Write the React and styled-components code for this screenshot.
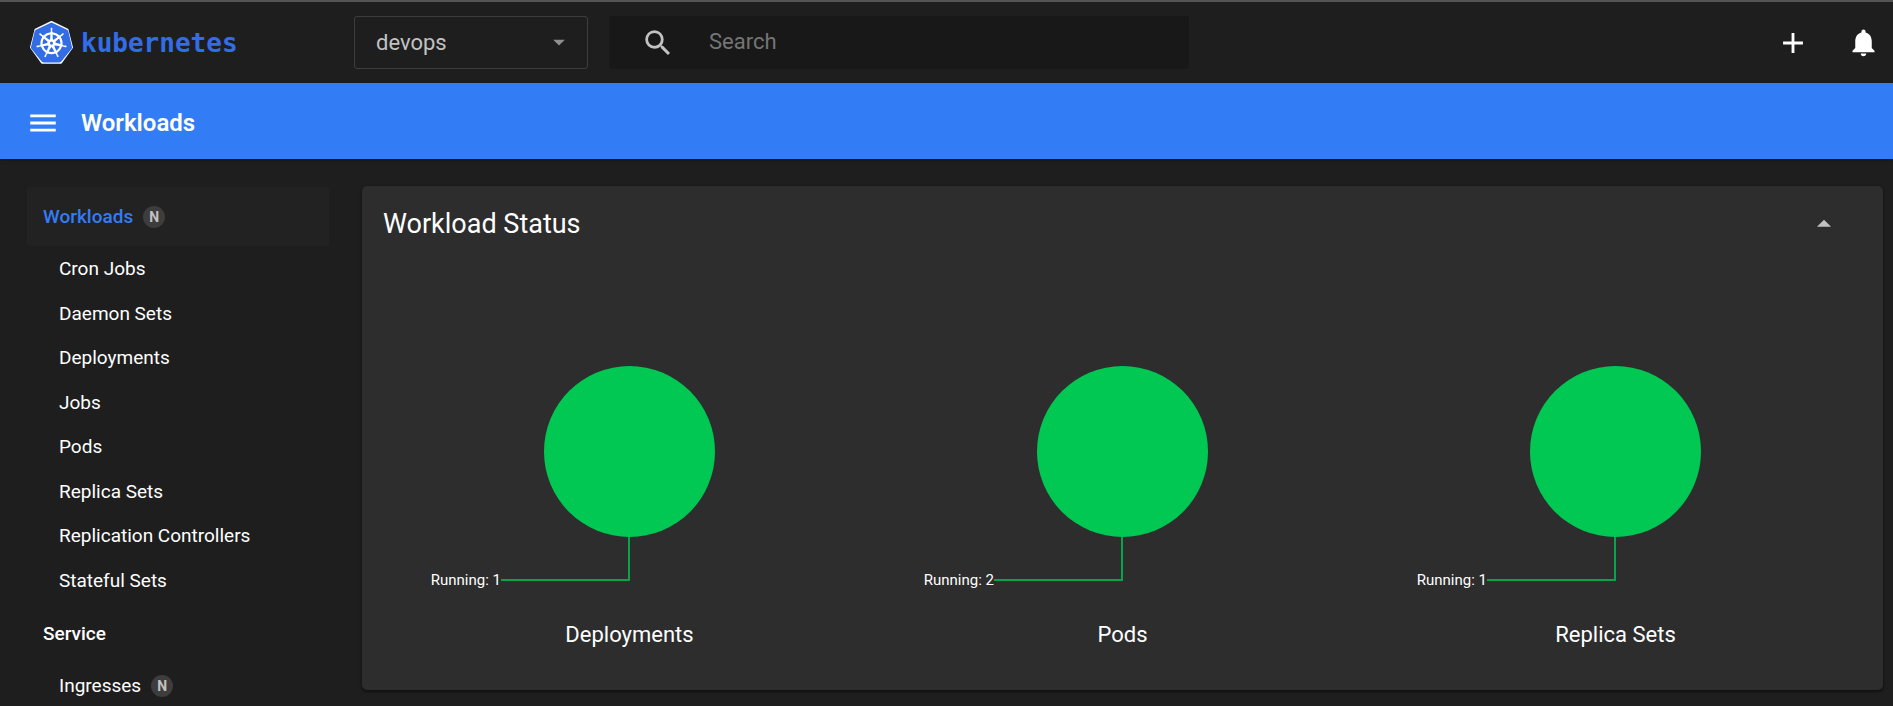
import React, { useState } from 'react';
import styled, { createGlobalStyle } from 'styled-components';
import { SiKubernetes } from 'react-icons/si';
import {
  MdAdd,
  MdArrowDropDown,
  MdArrowDropUp,
  MdMenu,
  MdNotifications,
  MdSearch,
} from 'react-icons/md';

const GlobalStyle = createGlobalStyle`
  *, *::before, *::after { box-sizing: border-box; }
  body {
    margin: 0;
    background: #1e1e1e;
    color: #fff;
    font-family: Roboto, "Liberation Sans", sans-serif;
  }
`;

const Shell = styled.div`
  display: flex;
  flex-direction: column;
  height: 100vh;
  overflow: hidden;
`;

const TopBar = styled.header`
  display: flex;
  align-items: center;
  flex: none;
  height: 83px;
  padding-left: 30px;
  border-top: 2px solid #545454;
`;

const Brand = styled.a`
  display: flex;
  align-items: center;
  gap: 8px;
  width: 324px;
  flex: none;
  color: #326de6;
  font: bold 26px/32px "DejaVu Sans Mono", monospace;
  text-decoration: none;
`;

const NamespaceField = styled.div`
  position: relative;
  flex: none;
  width: 234px;
  margin-right: 21px;
`;

const NamespaceSelect = styled.select`
  appearance: none;
  width: 100%;
  height: 53px;
  padding: 0 40px 0 21px;
  border: 1px solid #3d3d3d;
  border-radius: 3px;
  background: transparent;
  color: #c2c2c2;
  font: 22px/28px Roboto, sans-serif;
`;

const SelectCaret = styled(MdArrowDropDown)`
  position: absolute;
  top: 12px;
  right: 15px;
  color: #8f8f8f;
  pointer-events: none;
`;

const SearchBox = styled.form`
  display: flex;
  align-items: center;
  gap: 34px;
  flex: 0 1 580px;
  height: 53px;
  padding: 0 32px;
  border-radius: 3px;
  background: #181818;
  color: #c2c2c2;
`;

const SearchInput = styled.input`
  flex: 1;
  min-width: 0;
  padding: 0 0 2px;
  border: 0;
  outline: 0;
  background: transparent;
  color: #c2c2c2;
  font: 22px/28px Roboto, sans-serif;
  &::placeholder { color: #757575; opacity: 1; }
`;

const Actions = styled.div`
  display: flex;
  gap: 10px;
  margin-left: auto;
`;

const IconButton = styled.button`
  display: flex;
  align-items: center;
  justify-content: center;
  flex: none;
  width: ${(p) => p.$width || 60}px;
  height: 60px;
  padding: 0;
  border: 0;
  background: transparent;
  color: ${(p) => p.$color || '#fff'};
  cursor: pointer;
`;

const TitleBar = styled.div`
  display: flex;
  align-items: center;
  gap: 21px;
  flex: none;
  height: 76px;
  padding: 3px 0 0 26px;
  background: #327df5;
  box-shadow: 0 1px 3px rgba(0, 0, 0, 0.4);
`;

const PageTitle = styled.h1`
  margin: 0;
  font-size: 24px;
  line-height: 32px;
  font-weight: 600;
`;

const Body = styled.div`
  display: flex;
  flex: 1;
  min-height: 0;
`;

const Sidebar = styled.nav`
  flex: none;
  width: 356px;
  padding: 28px 27px 0;
  overflow-y: auto;
  scrollbar-width: none;
`;

const NavSection = styled.section`
  margin-bottom: 1px;
`;

const NavLink = styled.a`
  display: flex;
  align-items: center;
  gap: 10px;
  color: #fff;
  font-size: 19px;
  line-height: 24px;
  text-decoration: none;
`;

const NavHeading = styled(NavLink)`
  height: 59px;
  padding-left: 16px;
  border-radius: 3px;
  background: ${(p) => (p.$active ? '#222' : 'transparent')};
  color: ${(p) => (p.$active ? '#327df5' : '#fff')};
  font-weight: 500;
`;

const NavList = styled.ul`
  display: grid;
  grid-auto-rows: 1fr;
  min-height: ${(p) => p.$height}px;
  margin: 0;
  padding: 1px 0 0;
  list-style: none;
`;

const NavItem = styled(NavLink)`
  height: 100%;
  min-height: 44px;
  padding-left: 32px;
`;

const Badge = styled.span`
  display: flex;
  align-items: center;
  justify-content: center;
  width: 22px;
  height: 22px;
  border-radius: 50%;
  background: #3d3d3d;
  color: #c2c2c2;
  font-size: 14px;
  line-height: 22px;
  font-weight: 700;
`;

const Content = styled.main`
  flex: 1;
  min-width: 0;
  padding: 27px 10px 16px 6px;
  overflow: hidden;
`;

const Card = styled.section`
  border-radius: 5px;
  padding: 0 21px 40px;
  background: #2d2d2d;
  box-shadow: 0 2px 3px rgba(0, 0, 0, 0.4), 0 0 3px rgba(0, 0, 0, 0.2);
`;

const CardHeader = styled.header`
  display: flex;
  align-items: center;
  justify-content: space-between;
  height: 76px;
  padding-right: 8px;
`;

const CardTitle = styled.h2`
  margin: 0;
  font-size: 27px;
  line-height: 36px;
  font-weight: 400;
`;

const Charts = styled.div`
  display: grid;
  grid-template-columns: repeat(3, 1fr);
  padding-top: 42px;
`;

const Chart = styled.figure`
  display: flex;
  flex-direction: column;
  align-items: center;
  gap: 16px;
  margin: 0;
`;

const ChartDrawing = styled.svg`
  display: block;
  width: 400px;
  height: 300px;
`;

const ChartLabel = styled.text`
  fill: #fff;
  font-size: 15px;
`;

const ChartTitle = styled.figcaption`
  font-size: 22px;
  line-height: 30px;
`;

const workloads = [
  'Cron Jobs',
  'Daemon Sets',
  'Deployments',
  'Jobs',
  'Pods',
  'Replica Sets',
  'Replication Controllers',
  'Stateful Sets',
];

const statuses = [
  { name: 'Deployments', running: 1 },
  { name: 'Pods', running: 2 },
  { name: 'Replica Sets', running: 1 },
];

function KubernetesLogo() {
  return (
    <svg width="43" height="43" viewBox="0 0 43 43" aria-hidden="true">
      <path
        d="M21.5 1 37.5 8.7 42 26.5 31 41.7H12L1 26.5 5.5 8.7Z"
        fill="#fff"
        stroke="#fff"
        strokeWidth="2"
        strokeLinejoin="round"
      />
      <SiKubernetes x="1" y="1" size={41} color="#326de6" />
    </svg>
  );
}

function StatusChart({ name, running }) {
  return (
    <Chart>
      <ChartDrawing viewBox="0 0 400 300">
        <circle cx="199.5" cy="147.5" r="85.5" fill="#00c853" />
        <path d="M199 233V276H71" fill="none" stroke="#0aa34b" strokeWidth="2" />
        <ChartLabel x="71" y="281" textAnchor="end">
          {`Running: ${running}`}
        </ChartLabel>
      </ChartDrawing>
      <ChartTitle>{name}</ChartTitle>
    </Chart>
  );
}

export default function App() {
  const [open, setOpen] = useState(true);
  return (
    <>
      <GlobalStyle />
      <Shell>
        <TopBar>
          <Brand href="#">
            <KubernetesLogo />
            kubernetes
          </Brand>
          <NamespaceField>
            <NamespaceSelect aria-label="Namespace" defaultValue="devops">
              <option value="devops">devops</option>
            </NamespaceSelect>
            <SelectCaret size={28} />
          </NamespaceField>
          <SearchBox role="search" onSubmit={(e) => e.preventDefault()}>
            <MdSearch size={34} />
            <SearchInput type="text" placeholder="Search" aria-label="Search" />
          </SearchBox>
          <Actions>
            <IconButton aria-label="Create new resource">
              <MdAdd size={34} />
            </IconButton>
            <IconButton aria-label="Notifications">
              <MdNotifications size={33} />
            </IconButton>
          </Actions>
        </TopBar>
        <TitleBar>
          <IconButton aria-label="Toggle navigation" $width={34}>
            <MdMenu size={34} />
          </IconButton>
          <PageTitle>Workloads</PageTitle>
        </TitleBar>
        <Body>
          <Sidebar>
            <NavSection>
              <NavHeading href="#workloads" $active>
                Workloads <Badge>N</Badge>
              </NavHeading>
              <NavList $height={357}>
                {workloads.map((item) => (
                  <li key={item}>
                    <NavItem href="#">{item}</NavItem>
                  </li>
                ))}
              </NavList>
            </NavSection>
            <NavSection>
              <NavHeading href="#service">Service</NavHeading>
              <NavList $height={45}>
                <li>
                  <NavItem href="#">
                    Ingresses <Badge>N</Badge>
                  </NavItem>
                </li>
              </NavList>
            </NavSection>
          </Sidebar>
          <Content>
            <Card>
              <CardHeader>
                <CardTitle>Workload Status</CardTitle>
                <IconButton
                  aria-label="Collapse card"
                  aria-expanded={open}
                  $color="#c2c2c2"
                  onClick={() => setOpen(!open)}
                >
                  <MdArrowDropUp size={34} />
                </IconButton>
              </CardHeader>
              {open && (
                <Charts>
                  {statuses.map((s) => (
                    <StatusChart key={s.name} {...s} />
                  ))}
                </Charts>
              )}
            </Card>
          </Content>
        </Body>
      </Shell>
    </>
  );
}
